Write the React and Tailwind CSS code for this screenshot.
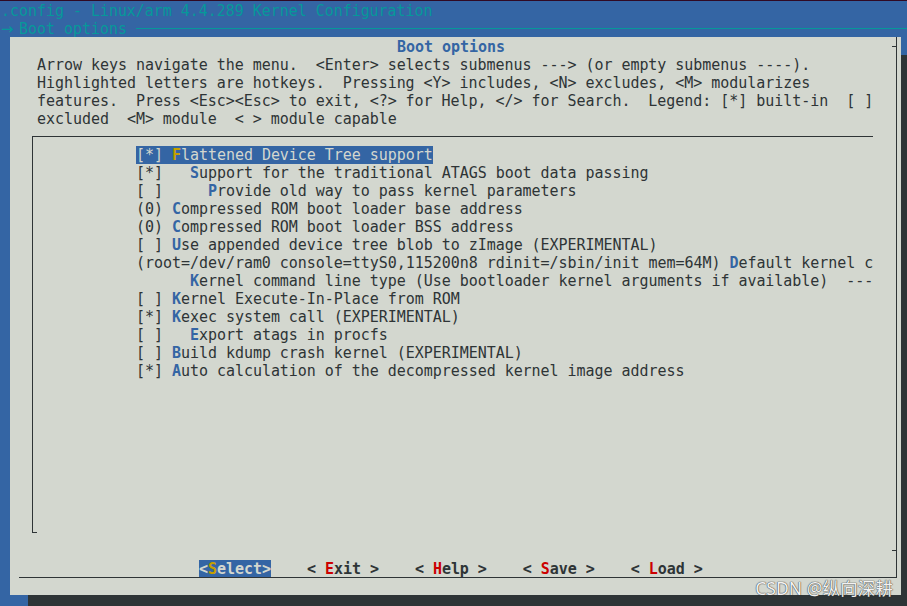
import React from 'react';

// menuconfig "Boot options" screen (Tango palette)
const items = [
  ['[*] ', 'F', 'lattened Device Tree support'],
  ['[*]   ', 'S', 'upport for the traditional ATAGS boot data passing'],
  ['[ ]     ', 'P', 'rovide old way to pass kernel parameters'],
  ['(0) ', 'C', 'ompressed ROM boot loader base address'],
  ['(0) ', 'C', 'ompressed ROM boot loader BSS address'],
  ['[ ] ', 'U', 'se appended device tree blob to zImage (EXPERIMENTAL)'],
  ['(root=/dev/ram0 console=ttyS0,115200n8 rdinit=/sbin/init mem=64M) ', 'D', 'efault kernel c'],
  ['      ', 'K', 'ernel command line type (Use bootloader kernel arguments if available)  ---'],
  ['[ ] ', 'K', 'ernel Execute-In-Place from ROM'],
  ['[*] ', 'K', 'exec system call (EXPERIMENTAL)'],
  ['[ ]   ', 'E', 'xport atags in procfs'],
  ['[ ] ', 'B', 'uild kdump crash kernel (EXPERIMENTAL)'],
  ['[*] ', 'A', 'uto calculation of the decompressed kernel image address'],
];

const buttons = [
  ['<', 'S', 'elect>'],
  ['< ', 'E', 'xit >'],
  ['< ', 'H', 'elp >'],
  ['< ', 'S', 'ave >'],
  ['< ', 'L', 'oad >'],
];

const helpLines = [
  'Arrow keys navigate the menu.  <Enter> selects submenus ---> (or empty submenus ----).',
  'Highlighted letters are hotkeys.  Pressing <Y> includes, <N> excludes, <M> modularizes',
  'features.  Press <Esc><Esc> to exit, <?> for Help, </> for Search.  Legend: [*] built-in  [ ]',
  'excluded  <M> module  < > module capable',
];

function MenuItem({ item, selected }) {
  const [pre, key, rest] = item;
  return (
    <div className="h-[18px] pt-[1px] leading-[18px] whitespace-pre">
      <span className={selected ? 'bg-[#3465a4] text-[#d3d7cf]' : ''}>
        {pre}
        <span className={selected ? 'font-bold text-[#c4a000]' : 'font-bold text-[#3465a4]'}>{key}</span>
        {rest}
      </span>
    </div>
  );
}

function Button({ btn, selected }) {
  const [pre, key, rest] = btn;
  return (
    <span
      className={
        'whitespace-pre font-bold ' +
        (selected ? 'bg-[#3465a4] text-[#d3d7cf]' : 'text-[#2e3436]')
      }
    >
      {pre}
      <span className={selected ? 'text-[#c4a000]' : 'text-[#cc0000]'}>{key}</span>
      {rest}
    </span>
  );
}

export default function App() {
  return (
    <div className="relative w-[907px] h-[606px] overflow-hidden bg-[#3465a4] border-t border-[#300a24] font-['DejaVu_Sans_Mono',monospace] text-[15px] tracking-[-0.04px]">
      {/* back title */}
      <div className="h-[18px] pt-[1px] leading-[18px] pl-[1px] whitespace-pre text-[#06989a]">
        .config - Linux/arm 4.4.289 Kernel Configuration
      </div>
      <div className="h-[18px] pt-[1px] leading-[18px] flex items-center text-[#06989a]">
        <span className="w-[18px] pl-[1px] whitespace-pre font-['DejaVu_Sans',sans-serif]">→</span>
        <span className="pl-[1px] whitespace-pre">Boot options </span>
        <div className="flex-1 border-t border-[#06989a]" />
      </div>

      {/* dialog */}
      <div className="ml-[10px] w-[891px] h-[558px] bg-[#d3d7cf] shadow-[18px_18px_0_#2e3436] pt-[9px] text-[#2e3436]">
        <div className="ml-[9px] w-[878px] h-[541px] border-r border-b border-[#2e3436]">
          {/* title row */}
          <div className="-mt-[9px] h-[18px] flex items-start">
            <span className="pl-[378px] pt-[1px] leading-[18px] font-bold text-[#3465a4] whitespace-pre">Boot options</span>
            <div className="ml-auto mt-[9px] w-[4px] border-t border-[#2e3436]" />
          </div>

          {/* help text */}
          <div className="pl-[18px]">
            {helpLines.map((l, i) => (
              <div key={i} className="h-[18px] pt-[1px] leading-[18px] whitespace-pre">
                {l}
              </div>
            ))}
          </div>

          {/* menu box */}
          <div className="ml-[13px] mt-[9px] w-[841px] h-[396px] border-t border-l border-[#2e3436] pt-[8px] pl-[103px] overflow-hidden">
            {items.map((it, i) => (
              <MenuItem key={i} item={it} selected={i === 0} />
            ))}
          </div>
          <div className="ml-[13px] w-[5px] border-t border-[#2e3436]" />

          {/* separator tick */}
          <div className="mt-[17px] ml-auto w-[4px] border-t border-[#2e3436]" />

          {/* buttons */}
          <div className="mt-[8px] h-[18px] pt-[1px] leading-[18px] pl-[180px] flex gap-[36px]">
            {buttons.map((b, i) => (
              <Button key={i} btn={b} selected={i === 0} />
            ))}
          </div>
        </div>
      </div>

      {/* watermark */}
      <div className="absolute right-[14px] bottom-[5px] font-['Noto_Sans','Noto_Sans_CJK_SC',sans-serif] text-[17.6px] tracking-normal text-[#f2f2f2] [text-shadow:0_0_1px_#333,0_0_1px_#333]">
        CSDN @纵向深耕
      </div>
    </div>
  );
}
